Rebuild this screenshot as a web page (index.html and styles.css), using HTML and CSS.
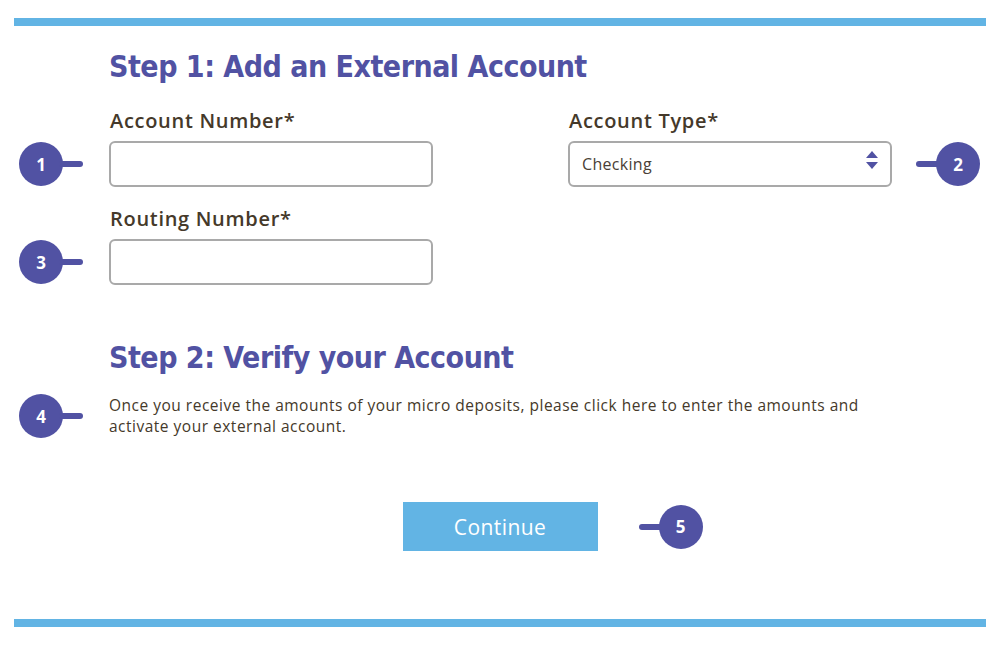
FILE: index.html
```html
<!DOCTYPE html>
<html lang="en">
<head>
    <meta charset="UTF-8">
    <meta name="viewport" content="width=device-width, initial-scale=1.0">
    <title>Add an External Account</title>
    <link rel="stylesheet" href="styles.css">
</head>
<body>
    <div class="page">
        <h1 class="step-title">Step 1: Add an External Account</h1>

        <div class="form-grid">
            <div class="marker marker-left"><span class="dot">1</span><span class="stem"></span></div>
            <div class="field">
                <label for="account-number">Account Number*</label>
                <input type="text" id="account-number">
            </div>
            <div class="field field-type">
                <label for="account-type">Account Type*</label>
                <div class="select-wrap">
                    <select id="account-type">
                        <option selected>Checking</option>
                        <option>Savings</option>
                    </select>
                    <svg class="select-arrows" width="12" height="18" viewBox="0 0 12 18">
                        <path d="M6 0 L12 7 L0 7 Z" fill="#5152a3"/>
                        <path d="M0 11 L12 11 L6 18 Z" fill="#5152a3"/>
                    </svg>
                </div>
            </div>
            <div class="marker marker-right"><span class="stem"></span><span class="dot">2</span></div>

            <div class="marker marker-left"><span class="dot">3</span><span class="stem"></span></div>
            <div class="field">
                <label for="routing-number">Routing Number*</label>
                <input type="text" id="routing-number">
            </div>
        </div>

        <h1 class="step-title step-two">Step 2: Verify your Account</h1>

        <div class="verify-row">
            <div class="marker marker-left"><span class="dot">4</span><span class="stem"></span></div>
            <p class="verify-text">Once you receive the amounts of your micro deposits, please click here to enter the amounts and activate your external account.</p>
        </div>

        <div class="actions">
            <button class="continue-btn">Continue</button>
            <div class="marker marker-right marker-btn"><span class="stem"></span><span class="dot">5</span></div>
        </div>
    </div>
</body>
</html>
```

FILE: styles.css
```css
body {
    margin: 0;
    font-family: "Open Sans", Lato, sans-serif;
    color: #45392a;
    background: #fff;
}
.page {
    margin: 18px 14px 0;
    border-top: 8px solid #62b4e4;
    border-bottom: 8px solid #62b4e4;
    padding-bottom: 68px;
}
.step-title {
    margin: 21px 0 0 95px;
    font-family: "DejaVu Sans Condensed", "DejaVu Sans", sans-serif;
    font-weight: bold;
    font-size: 30px;
    letter-spacing: -0.5px;
    line-height: 40px;
    color: #5152a3;
}
.step-two {
    margin-top: 53px;
}

/* form fields */
.form-grid {
    display: grid;
    grid-template-columns: 95px 324px 135px 324px 1fr;
    row-gap: 20px;
    margin-top: 22px;
}
.field {
    display: flex;
    flex-direction: column;
    gap: 8px;
}
.field-type {
    grid-column: 4;
}
.field label {
    font-size: 20px;
    line-height: 24px;
    font-weight: 600;
    letter-spacing: 0.7px;
    padding-left: 1px;
}
.field input,
.field select {
    box-sizing: border-box;
    width: 324px;
    height: 46px;
    border: 2px solid #a9a9a9;
    border-radius: 6px;
    background: #fff;
    font-family: "Open Sans", sans-serif;
    font-size: 16px;
    letter-spacing: 0.3px;
    color: #4a4036;
    padding: 0 12px;
    margin: 0;
}
.field select {
    appearance: none;
    -webkit-appearance: none;
}
.select-wrap {
    position: relative;
}
.select-arrows {
    position: absolute;
    right: 14px;
    top: 10px;
}

/* numbered markers */
.marker {
    display: flex;
    align-items: center;
    align-self: end;
    margin-bottom: 1px;
}
.marker-left {
    padding-left: 5px;
}
.marker-right {
    padding-left: 24px;
}
.dot {
    width: 44px;
    height: 44px;
    border-radius: 50%;
    background: #5152a3;
    color: #fff;
    display: flex;
    align-items: center;
    justify-content: center;
    font-family: "Open Sans", sans-serif;
    font-weight: bold;
    font-size: 17px;
}
.stem {
    width: 24px;
    height: 6px;
    background: #5152a3;
    border-radius: 3px;
}
.marker-left .stem {
    margin-left: -4px;
}
.marker-right .stem {
    margin-right: -4px;
}

/* step 2 */
.verify-row {
    display: flex;
    align-items: center;
    margin-top: 16px;
}
.verify-row .marker {
    width: 90px;
    align-self: center;
    margin-bottom: 0;
}
.verify-text {
    margin: 0;
    width: 775px;
    font-size: 15.5px;
    letter-spacing: 0.5px;
    line-height: 21px;
}

.actions {
    display: grid;
    grid-template-columns: 1fr auto 1fr;
    align-items: center;
    margin-top: 64px;
}
.continue-btn {
    grid-column: 2;
    width: 195px;
    height: 49px;
    border: none;
    background: #62b4e4;
    color: #fff;
    font-family: "Open Sans", sans-serif;
    font-size: 21px;
    letter-spacing: 0.4px;
    cursor: pointer;
}
.marker-btn {
    align-self: center;
    padding-left: 41px;
    margin-bottom: 0;
}
```
